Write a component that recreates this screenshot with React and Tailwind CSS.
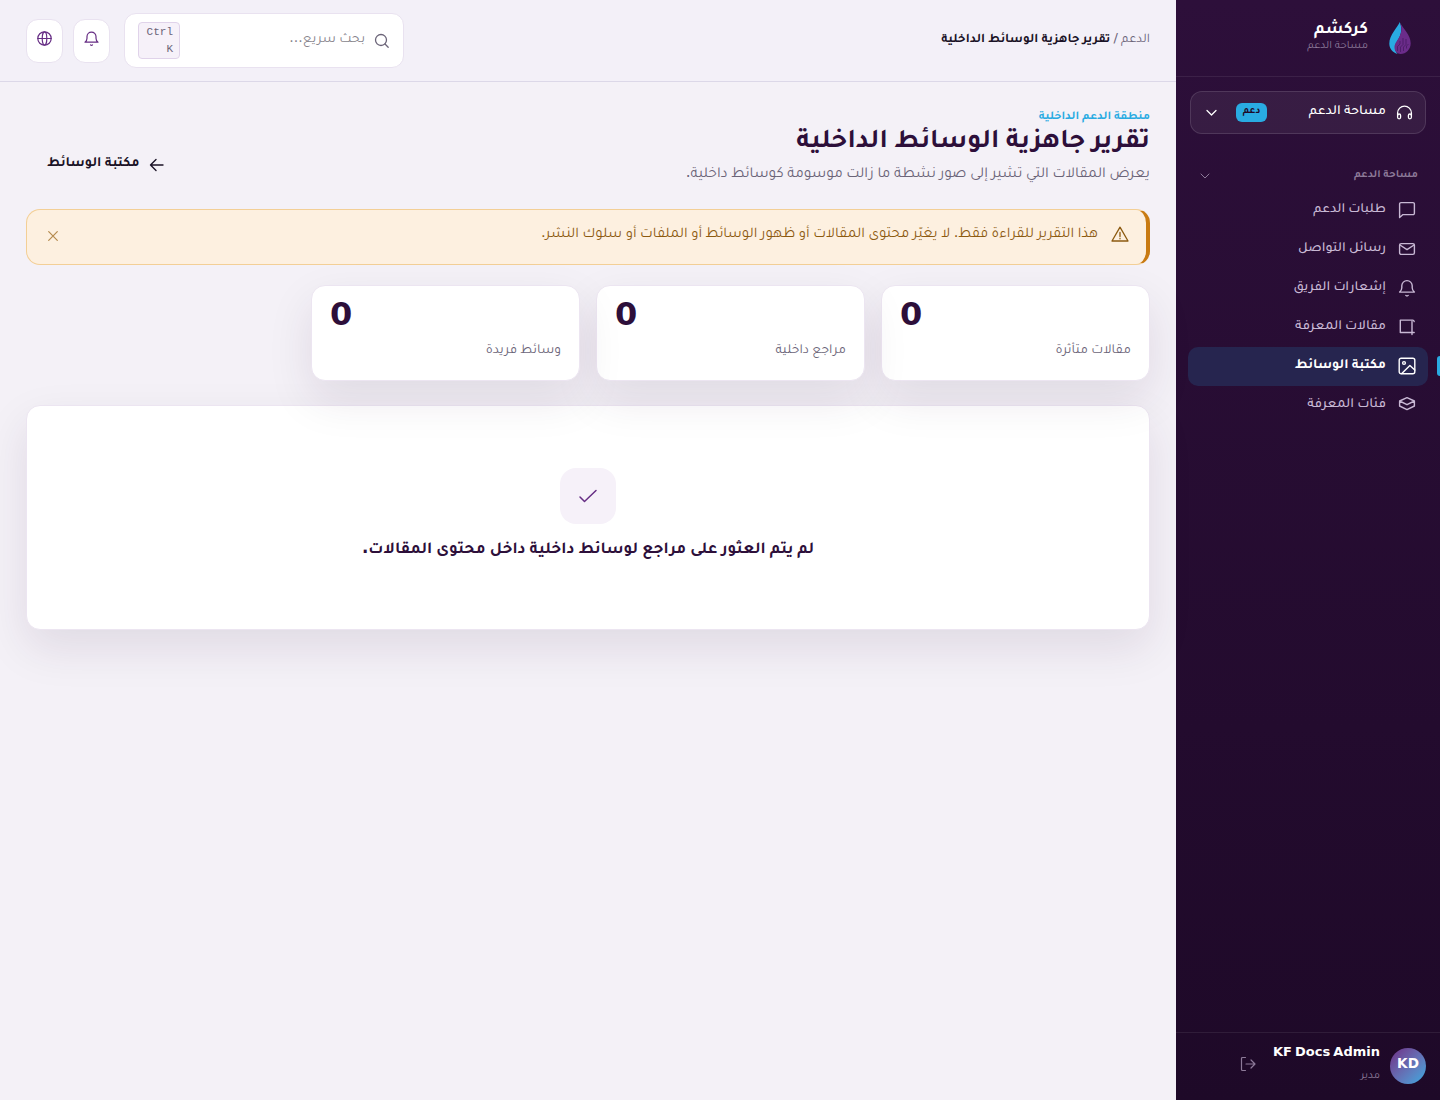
import React from 'react';

const stroke = {
   fill: 'none',
   stroke: 'currentColor',
   strokeLinecap: 'round',
   strokeLinejoin: 'round',
};

const Icon = ({ size = 18, width = 1.4, className = '', children }) => (
   <svg
      width={size}
      height={size}
      viewBox={`0 0 ${size} ${size}`}
      strokeWidth={width}
      className={`shrink-0 ${className}`}
      {...stroke}
   >
      {children}
   </svg>
);

// punctuation is set in DejaVu, letters in Tajawal
const Mark = ({ children }) => <span className="font-['DejaVu_Sans'] leading-none">{children}</span>;

const links = [
   {
      name: 'طلبات الدعم',
      icon: <path d="M1.6 16.6V3A1.4 1.4 0 0 1 3 1.6h12A1.4 1.4 0 0 1 16.4 3v9.2a1.4 1.4 0 0 1-1.4 1.4H5z" />,
   },
   {
      name: 'رسائل التواصل',
      icon: (
         <>
            <rect x="1.6" y="3.6" width="14.8" height="10.8" rx="1.6" />
            <path d="m2 5 7 4.6L16 5" />
         </>
      ),
   },
   {
      name: 'إشعارات الفريق',
      icon: <path d="M1.6 13.1h14.8c-1.3-1-2.2-2-2.2-4.3V6.8a5.2 5.2 0 0 0-10.4 0v2c0 2.3-.9 3.3-2.2 4.3M7.8 16.4a1.6 1.6 0 0 0 2.4 0" />,
   },
   {
      name: 'مقالات المعرفة',
      icon: <path d="M14 16.6V3.4M16.2 3.6c-.2-.9-.6-1.5-1.5-1.5H2.3v12.4h13.9" />,
   },
   {
      name: 'مكتبة الوسائط',
      active: true,
      icon: (
         <>
            <rect x="1.2" y="1.2" width="15.6" height="15.6" rx="2" />
            <circle cx="6" cy="6" r="1.4" />
            <path d="m3.8 16.5 8.1-8.1 4.9 4.7" />
         </>
      ),
   },
   {
      name: 'فئات المعرفة',
      icon: <path d="m9 1.6 7.4 3.4L9 8.7 1.6 5zM1.6 5v5L9 13.6l7.4-3.6V5" />,
   },
];

const stats = ['مقالات متأثرة', 'مراجع داخلية', 'وسائط فريدة'];

function Logo() {
   return (
      <svg width="32" height="32" viewBox="0 0 32 32" fill="none">
         <path d="M15.8 0C13.8 5 5.3 13 5.3 21.5c0 4.8 3 9 8.2 10.4-3-3.5-3.2-8-.7-12.2C15.500 15.500 19.500 9.500 15.800 0z" fill="#29abe2" />
         <path d="M16.300 1c2.500 5.500 10.400 11.700 10.400 20.200C26.700 27.300 22 31.900 16.500 31.900c-3 0-6-2.400-6-6.400C10.500 18.500 20.500 14.500 16.300 1z" fill="#6b2c8a" />
         <path d="M13.500 29v-4.500l2.500-2.500v-3M16.500 30v-5l2.500-2.500V16M19.500 29v-4l2.500-2.500V17M22.500 26.500v-2.500l2-2" stroke="#3b1554" strokeWidth=".6" />
      </svg>
   );
}

function Sidebar() {
   return (
      <aside className="flex w-[264px] shrink-0 flex-col bg-linear-to-b from-[#2d0f3a] to-[#1e0928] text-white">
         <div className="flex h-[77px] items-center gap-4 border-b border-white/8 pr-6">
            <Logo />
            <div className="pb-px">
               <div className="pt-px text-[17.1px] leading-[18px] font-bold">كركشم</div>
               <div className="text-[11.2px] leading-[14px] text-[#8d7a99]">مساحة الدعم</div>
            </div>
         </div>

         <button className="mx-3.5 mt-3.5 flex h-[43px] items-center rounded-xl border border-white/12 bg-white/6 px-3">
            <Icon size={17} width={1.3} className="-mt-px">
               <path d="M1.6 11.5V9a6.9 6.9 0 0 1 13.8 0v2.5" />
               <rect x="1.6" y="10" width="3" height="4.8" rx="1.5" />
               <rect x="12.4" y="10" width="3" height="4.8" rx="1.5" />
            </Icon>
            <span className="mr-[10px] text-[13.92px] font-medium">مساحة الدعم</span>
            <span className="mr-auto h-[19px] w-[31px] rounded-md bg-[#29abe2] text-center text-[10.2px] leading-[18px] font-bold text-[#1e0928]">دعم</span>
            <Icon size={13} width={1.3} className="mr-[18px] ml-[2px] -mt-px">
               <path d="m2 4.5 4.500 4.500L11 4.500" />
            </Icon>
         </button>

         <div className="mt-8 mb-[7px] flex h-[18px] items-center justify-between pr-[22px] pl-[23px] text-[#8d7a99]">
            <span className="pt-[2px] text-[11.04px] font-bold">مساحة الدعم</span>
            <Icon size={12} width={1} className="mt-[2px]">
               <path d="m2 4 4 4 4-4" />
            </Icon>
         </div>

         <nav className="flex flex-col px-3">
            {links.map((link) => (
               <a
                  key={link.name}
                  className={
                     link.active
                        ? 'relative flex h-[39px] items-center gap-3 rounded-[10px] bg-[#26254f] px-3 text-[13.92px] font-bold text-white'
                        : 'relative flex h-[39px] items-center gap-3 px-3 text-[13.92px] font-medium text-[#c8b8d4]'
                  }
               >
                  {link.active && (
                     <span className="absolute top-[9px] -right-3 h-5 w-[3px] rounded-l-[3px] bg-[#29abe2]" />
                  )}
                  <Icon className="-mt-[2px]">{link.icon}</Icon>
                  <span>{link.name}</span>
               </a>
            ))}
         </nav>

         <div className="mt-auto flex h-[68px] items-center border-t border-white/8 pr-3.5 pb-0.5">
            <div className="flex size-9 items-center justify-center rounded-full bg-linear-to-br from-[#6b2c86] to-[#29abe2] pb-1 font-['DejaVu_Sans'] text-[13.6px] font-bold">
               KD
            </div>
            <div className="mr-2.5 pb-[3px]">
               <div dir="ltr" className="font-['DejaVu_Sans'] text-[13px] leading-5 font-bold [word-spacing:-1.4px]">KF Docs Admin</div>
               <div className="mt-[5px] text-[11.2px] leading-5 text-[#8d7a99]">مدير</div>
            </div>
            <Icon size={16} width={1.2} className="mr-[17px] -mt-[3px] text-[#8d7a99]">
               <path d="M5.5 1.5h-3a1 1 0 0 0-1 1v11a1 1 0 0 0 1 1h3M6 8h9M11 4l4 4-4 4" />
            </Icon>
         </div>
      </aside>
   );
}

function Topbar() {
   return (
      <header className="flex h-[82px] items-center border-b border-[#dcd8e8] bg-[#f3f0f8] px-[26px]">
         <div className="pt-px text-[13px] text-[#6b6478]">
            الدعم <Mark>/</Mark> <b className="font-bold text-[#1a1226]">تقرير جاهزية الوسائط الداخلية</b>
         </div>
         <div className="mr-auto flex h-[55px] w-[280px] items-center rounded-xl border border-[#e9e2f0] bg-white px-[13px]">
            <Icon size={16} width={1.3} className="text-[#6b6478]">
               <circle cx="7" cy="7" r="5.5" />
               <path d="m11 11 3.200 3.200" />
            </Icon>
            <span className="mr-[9px] pt-px text-[14.08px] text-[#87848c]">بحث سريع<Mark>...</Mark></span>
            <kbd className="mr-auto flex h-[37px] w-[42px] flex-col rounded-[4px] border border-[#e0d3ea] bg-[#f6f1f9] px-1.5 font-['Liberation_Mono'] text-[11px] leading-[17px] text-[#6b6478]">
               <span dir="ltr" className="pt-px text-right">Ctrl</span>
               <span dir="ltr" className="text-right">K</span>
            </kbd>
         </div>
         <button className="mr-3.5 flex h-11 w-[37px] items-center justify-center rounded-xl border border-[#e9e2f0] bg-white pb-1 text-[#662d84]">
            <Icon size={15} width={1.2}>
               <path d="M1 11.2h13c-1.2-.9-2-1.9-2-3.9V5.6a4.5 4.5 0 0 0-9 0v1.7c0 2-.8 3-2 3.9M6.5 13.9a1.4 1.4 0 0 0 2 0" />
            </Icon>
         </button>
         <button className="mr-2.5 flex h-11 w-[37px] items-center justify-center rounded-xl border border-[#e9e2f0] bg-white pb-[5px] text-[#662d84]">
            <Icon size={15} width={1.2}>
               <circle cx="7.5" cy="7.5" r="6.7" />
               <ellipse cx="7.5" cy="7.5" rx="2.3" ry="6.7" />
               <path d="M.8 7.5h13.4" />
            </Icon>
         </button>
      </header>
   );
}

export default function App() {
   return (
      <div dir="rtl" className="flex h-[1100px] w-full bg-[#f4f1f7] font-['Tajawal','DejaVu_Sans',sans-serif] text-[#1a1226]">
         <Sidebar />
         <div className="flex min-w-0 flex-1 flex-col">
            <Topbar />
            <main className="px-[26px] pt-[27px]">
               <div className="flex h-[78px] items-start justify-between">
                  <div>
                     <div className="text-[12px] leading-4 font-bold text-[#29abe2]">منطقة الدعم الداخلية</div>
                     <h1 className="mt-[3px] text-[27.2px] leading-8 font-bold text-[#2d0f3a]">تقرير جاهزية الوسائط الداخلية</h1>
                     <p className="mt-[5px] text-[15.2px] leading-5 text-[#6b6478]">
                        يعرض المقالات التي تشير إلى صور نشطة ما زالت موسومة كوسائط داخلية<Mark>.</Mark>
                     </p>
                  </div>
                  <a className="mt-[45px] ml-[21px] flex items-center gap-2.5 text-[14.08px] leading-5 font-bold">
                     <Icon size={16} width={1.4} className="mt-[2px]">
                        <path d="M14 8H1.5M7 2.5 1.500 8 7 13.500" />
                     </Icon>
                     مكتبة الوسائط
                  </a>
               </div>

               <div className="mt-[22px] flex h-14 items-center rounded-[14px] border border-r-4 border-[#f3cf96] border-r-[#c97b12] bg-[#fdf0e0] pr-[17px] pl-5 text-[#8c5a10]">
                  <Icon width={1.3} className="-mt-[6px]">
                     <path d="M9 2.2 17 16H1zM9 7.5v4M9 13.5v.3" />
                  </Icon>
                  <span className="mr-[13px] pb-[3px] text-[14.72px]">
                     هذا التقرير للقراءة فقط<Mark>.</Mark> لا يغيّر محتوى المقالات أو ظهور الوسائط أو الملفات أو سلوك النشر<Mark>.</Mark>
                  </span>
                  <Icon size={12} width={1.2} className="mr-auto -mt-[2px] text-[#b58a4e]">
                     <path d="m1.7 1.7 8.6 8.6M10.3 1.7l-8.6 8.6" />
                  </Icon>
               </div>

               <div className="mt-5 flex gap-4">
                  {stats.map((name) => (
                     <div key={name} className="h-24 w-[269px] rounded-[14px] border border-[#ece5f1] bg-white px-[18px] pt-[9px] shadow-[0_18px_45px_rgba(45,15,58,0.1)]">
                        <div className="text-left font-['DejaVu_Sans'] text-[32px] leading-[38px] font-bold text-[#2d0f3a]">0</div>
                        <div className="mt-2 text-[13.76px] leading-5 text-[#6b6478]">{name}</div>
                     </div>
                  ))}
               </div>

               <div className="mt-6 flex h-[225px] flex-col items-center rounded-[14px] border border-[#ece5f1] bg-white pt-[62px] shadow-[0_18px_45px_rgba(45,15,58,0.1)]">
                  <div className="flex size-14 items-center justify-center rounded-2xl bg-[#f6f1f9] text-[#662d84]">
                     <Icon size={20} width={1.5}>
                        <path d="m2 11 4.5 4.5L18 4.5" />
                     </Icon>
                  </div>
                  <div className="mt-[15px] text-[16.8px] leading-6 font-bold text-[#2d0f3a]">
                     لم يتم العثور على مراجع لوسائط داخلية داخل محتوى المقالات<Mark>.</Mark>
                  </div>
               </div>
            </main>
         </div>
      </div>
   );
}
